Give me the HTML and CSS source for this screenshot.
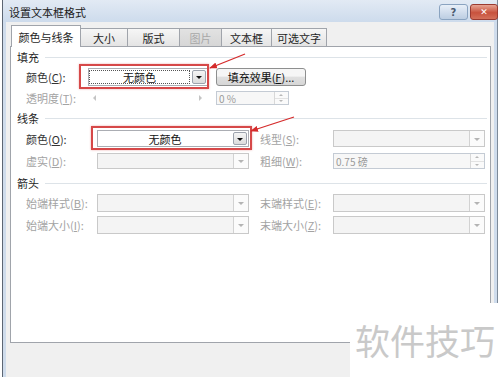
FILE: index.html
```html
<!DOCTYPE html>
<html lang="zh-CN">
<head>
    <meta charset="UTF-8">
    <meta name="viewport" content="width=device-width, initial-scale=1.0">
    <title>设置文本框格式</title>
    <link rel="stylesheet" href="styles.css">
</head>
<body>

    <!-- Dialog window -->
    <div class="window">
        <div class="titlebar">
            <span class="title">设置文本框格式</span>
            <div class="caption-btns">
                <span class="cbtn help">?</span>
                <span class="cbtn close">✕</span>
            </div>
        </div>

        <div class="client">
            <!-- Tabs -->
            <div class="tabs">
                <span class="tab active t-color">颜色与线条</span>
                <span class="tab t-size">大小</span>
                <span class="tab t-layout">版式</span>
                <span class="tab disabled t-pic">图片</span>
                <span class="tab t-box">文本框</span>
                <span class="tab t-alt">可选文字</span>
            </div>

            <div class="panel">
                <!-- 填充 -->
                <div class="group-title"><span>填充</span></div>
                <div class="fill-grid">
                    <label>颜色(<u>C</u>):</label>
                    <div class="combo mark mark-fill">
                        <span class="combo-text focus">无颜色</span>
                        <span class="drop"></span>
                    </div>
                    <button class="btn">填充效果(<u>F</u>)...</button>

                    <label class="dis">透明度(<u>T</u>):</label>
                    <div class="slider">
                        <span class="tri-left"></span>
                        <span class="tri-right"></span>
                    </div>
                    <div class="spin short">
                        <span class="spin-text">0 %</span>
                        <span class="spin-btns"><i class="up"></i><i class="down"></i></span>
                    </div>
                </div>

                <!-- 线条 -->
                <div class="group-title line-title"><span>线条</span></div>
                <div class="pair-grid">
                    <label>颜色(<u>O</u>):</label>
                    <div class="combo mark mark-line">
                        <span class="combo-text">无颜色</span>
                        <span class="drop"></span>
                    </div>
                    <label class="dis">线型(<u>S</u>):</label>
                    <div class="combo disabled"><span class="combo-text"></span><span class="drop"></span></div>

                    <label class="dis">虚实(<u>D</u>):</label>
                    <div class="combo disabled"><span class="combo-text"></span><span class="drop"></span></div>
                    <label class="dis">粗细(<u>W</u>):</label>
                    <div class="spin">
                        <span class="spin-text">0.75 磅</span>
                        <span class="spin-btns"><i class="up"></i><i class="down"></i></span>
                    </div>
                </div>

                <!-- 箭头 -->
                <div class="group-title arrow-title"><span>箭头</span></div>
                <div class="pair-grid arrow-grid">
                    <label class="dis">始端样式(<u>B</u>):</label>
                    <div class="combo disabled"><span class="combo-text"></span><span class="drop"></span></div>
                    <label class="dis">末端样式(<u>E</u>):</label>
                    <div class="combo disabled"><span class="combo-text"></span><span class="drop"></span></div>

                    <label class="dis">始端大小(<u>I</u>):</label>
                    <div class="combo disabled"><span class="combo-text"></span><span class="drop"></span></div>
                    <label class="dis">末端大小(<u>Z</u>):</label>
                    <div class="combo disabled"><span class="combo-text"></span><span class="drop"></span></div>
                </div>
            </div>

            <div class="footer"></div>
        </div>
    </div>

    <!-- red annotation arrows -->
    <svg class="annot" width="500" height="377" viewBox="0 0 500 377">
        <defs>
            <marker id="head" markerWidth="8" markerHeight="6" refX="7" refY="3" orient="auto" markerUnits="userSpaceOnUse">
                <polygon points="0,0 8,3 0,6" fill="#d52b2b"/>
            </marker>
        </defs>
        <line x1="245" y1="54" x2="210" y2="68" stroke="#d52b2b" stroke-width="1.3" marker-end="url(#head)"/>
        <line x1="294" y1="117" x2="251" y2="131" stroke="#d52b2b" stroke-width="1.3" marker-end="url(#head)"/>
    </svg>

    <!-- watermark -->
    <div class="watermark">软件技巧</div>

</body>
</html>
```

FILE: styles.css
```css
/* body */
body {
    margin: 0;
    padding: 0;
    background: #ffffff;
    font-family: "Noto Sans CJK SC", "Liberation Sans", sans-serif;
    font-size: 11px;
    color: #222;
    width: 500px;
    height: 377px;
    overflow: hidden;
    position: relative;
}

/* Window frame */
.window {
    margin-left: 2px;
    width: 494px;
    height: 377px;
    border-left: 1px solid #5d6673;
    border-right: 1px solid #7d8a99;
    background: #cfdcec;
    display: flex;
    flex-direction: column;
}

.titlebar {
    height: 22px;
    flex: none;
    display: flex;
    align-items: center;
    justify-content: space-between;
    background: linear-gradient(#e2eaf4, #cddbec);
    padding-left: 6px;
}

.title {
    color: #1b1b1b;
    font-size: 11px;
    margin-top: 1px;
}

.caption-btns {
    display: flex;
    gap: 2px;
    align-self: flex-start;
    margin-top: 4px;
    margin-right: -1px;
}

.cbtn {
    height: 14px;
    border-radius: 3px;
    display: flex;
    align-items: center;
    justify-content: center;
    font-family: "DejaVu Sans", sans-serif;
    font-weight: bold;
}

.help {
    width: 27px;
    border: 1px solid #8aa3c0;
    background: linear-gradient(#e8eff8, #bccde2);
    color: #4a5a70;
    font-size: 10px;
}

.close {
    width: 26px;
    border: 1px solid #9a3a30;
    background: linear-gradient(#e7a393, #c8523d 55%, #d4705a);
    color: #fff;
    font-size: 9px;
}

/* Client area */
.client {
    flex: 1;
    margin: 0 3px;
    background: #f0f0f0;
    display: flex;
    flex-direction: column;
}

.tabs {
    display: flex;
    height: 21px;
    margin-top: 3px;
    padding-left: 5px;
    position: relative;
    z-index: 1;
}

.tab {
    height: 18px;
    margin-top: 3px;
    box-sizing: border-box;
    border: 1px solid #a0a4ab;
    border-bottom: none;
    border-left: none;
    background: linear-gradient(#f6f6f6, #e4e4e4);
    display: flex;
    align-items: center;
    justify-content: center;
    color: #1e1e1e;
}

.tab.active {
    height: 22px;
    margin-top: 0;
    border-left: 1px solid #a0a4ab;
    background: #fff;
}

.tab.disabled {
    background: linear-gradient(#e2e2e2, #d6d6d6);
    color: #a8a8a8;
}

.t-color { width: 70px; }
.t-size { width: 47px; }
.t-layout { width: 52px; }
.t-pic { width: 42px; }
.t-box { width: 50px; }
.t-alt { width: 55px; }

/* Tab panel */
.panel {
    margin: 0 3px 0 4px;
    height: 297px;
    box-sizing: border-box;
    background: #fff;
    border: 1px solid #a0a4ab;
    padding: 3px 0 0 6px;
}

.footer {
    flex: 1;
}

.group-title {
    display: flex;
    align-items: center;
    height: 14px;
    margin-right: 3px;
    color: #1e1e1e;
}

.group-title::after {
    content: "";
    flex: 1;
    border-top: 1px solid #dde3e8;
    margin-left: 6px;
}

.line-title { margin-top: 6px; }
.arrow-title { margin-top: 7px; }

label {
    color: #333;
    white-space: nowrap;
}

label.dis {
    color: #a3a3a3;
}

/* Fill section */
.fill-grid {
    display: grid;
    grid-template-columns: 62px 120px 98px;
    grid-template-rows: 18px 14px;
    row-gap: 5px;
    align-items: center;
    margin-top: 4px;
    padding-left: 9px;
}

.fill-grid > .btn,
.fill-grid > .spin {
    margin-left: 8px;
}

/* two-column sections */
.pair-grid {
    display: grid;
    grid-template-columns: 71px 152px 84px 152px;
    grid-template-rows: 17px 16px;
    row-gap: 6px;
    align-items: center;
    margin-top: 5px;
    padding-left: 9px;
}

.pair-grid > label:nth-child(4n+3) {
    padding-left: 11px;
}

.arrow-grid {
    grid-template-rows: 18px 18px;
    row-gap: 4px;
    margin-top: 4px;
}

/* Combo boxes */
.combo {
    height: 100%;
    box-sizing: border-box;
    border: 1px solid #abadb3;
    background: #fff;
    display: flex;
    position: relative;
}

.combo-text {
    flex: 1;
    display: flex;
    align-items: center;
    justify-content: center;
    color: #111;
}

.combo-text.focus {
    margin: 2px 2px 2px 1px;
    outline: 1px dotted #555;
}

.drop {
    width: 12px;
    margin: 1px;
    border: 1px solid #9da3ad;
    border-radius: 2px;
    background: linear-gradient(#f5f5f5, #dcdcdc);
    position: relative;
}

.drop::after {
    content: "";
    position: absolute;
    left: 3px;
    top: 50%;
    margin-top: -1px;
    border-left: 3px solid transparent;
    border-right: 3px solid transparent;
    border-top: 3px solid #111;
}

.combo.disabled {
    border-color: #c9c9c9;
    background: #f4f4f4;
}

.combo.disabled .drop {
    margin: 0;
    border: none;
    border-left: 1px solid #d2d2d2;
    border-radius: 0;
    background: #fbfbfb;
    width: 14px;
}

.combo.disabled .drop::after {
    left: 4px;
    border-top-color: #b4b4b4;
}

/* red highlight boxes */
.mark::before {
    content: "";
    position: absolute;
    border: 2px solid #d64848;
    box-shadow: 0 0 2px rgba(214, 72, 72, 0.45);
    pointer-events: none;
}

.mark-fill::before {
    left: -10px;
    right: -2px;
    top: -5px;
    bottom: -4px;
}

.mark-line::before {
    left: -7px;
    right: -4px;
    top: -5px;
    bottom: -4px;
}

/* Buttons */
.btn {
    height: 18px;
    padding: 0;
    font-family: inherit;
    font-size: 11px;
    color: #111;
    border: 1px solid #8e8f8f;
    border-radius: 3px;
    background: linear-gradient(#f6f6f6 45%, #e0e0e0 50%, #d6d6d6);
}

/* Slider (disabled) */
.slider {
    height: 100%;
    position: relative;
}

.tri-left, .tri-right {
    position: absolute;
    top: 4px;
    border-top: 3px solid transparent;
    border-bottom: 3px solid transparent;
}

.tri-left {
    left: 5px;
    border-right: 3px solid #c4c4c4;
}

.tri-right {
    right: 6px;
    border-left: 3px solid #c4c4c4;
}

/* Spin boxes */
.spin {
    height: 100%;
    box-sizing: border-box;
    border: 1px solid #c4cbd4;
    background: #f7f7f7;
    display: flex;
}

.spin.short {
    width: 73px;
}

.spin-text {
    flex: 1;
    display: flex;
    align-items: center;
    padding-left: 2px;
    color: #9a9a9a;
    font-size: 10px;
}

.spin-btns {
    width: 13px;
    display: flex;
    flex-direction: column;
    border-left: 1px solid #d8d8d8;
    background: #fafafa;
}

.spin-btns i {
    flex: 1;
    position: relative;
}

.spin-btns i::after {
    content: "";
    position: absolute;
    left: 4px;
    top: 50%;
    margin-top: -1px;
    border-left: 2px solid transparent;
    border-right: 2px solid transparent;
}

.spin-btns .up::after {
    border-bottom: 2px solid #b8b8b8;
}

.spin-btns .down {
    border-top: 1px solid #e2e2e2;
}

.spin-btns .down::after {
    border-top: 2px solid #b8b8b8;
}

/* Overlays */
.annot {
    position: absolute;
    left: 0;
    top: 0;
    pointer-events: none;
}

.watermark {
    position: absolute;
    left: 350px;
    top: 303px;
    right: 0;
    bottom: 0;
    background: #fff;
    color: #c9c9c9;
    font-size: 35px;
    line-height: 1;
    padding: 19px 0 0 5px;
    letter-spacing: 0;
}
```
